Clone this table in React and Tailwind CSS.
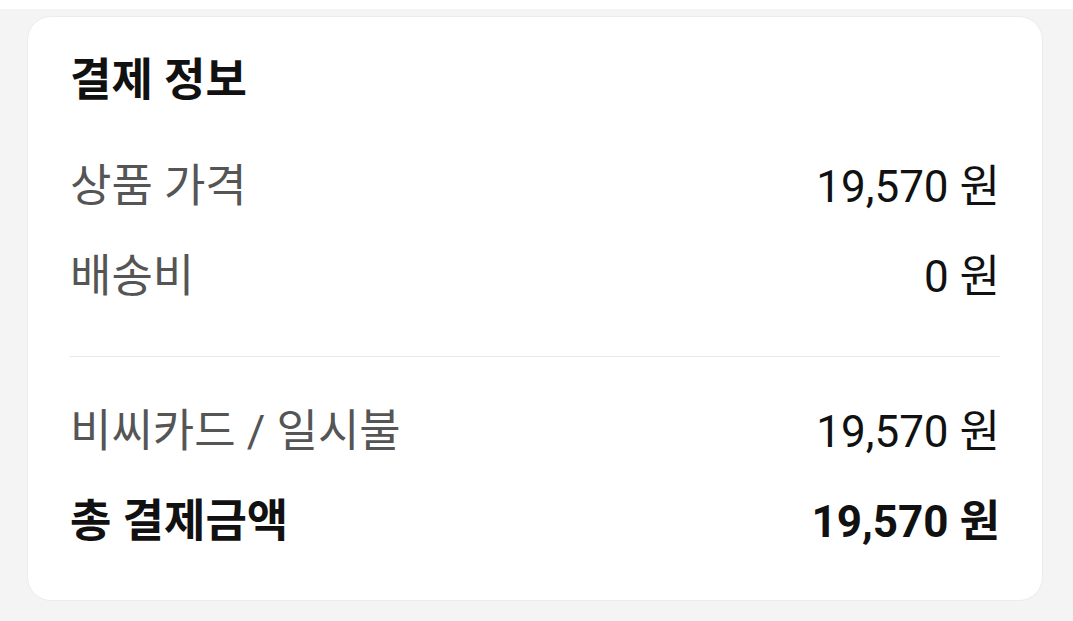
export default function App() {
  const font = { fontFamily: 'Roboto, "Noto Sans CJK KR", sans-serif' };
  const Row = ({ label, value, bold }) => (
    <div className="flex h-[90px] items-center justify-between">
      <span className={bold ? "text-[45px] font-bold text-[#111111]" : "text-[45px] text-[#555555]"}>{label}</span>
      <span className={bold ? "text-[44px] font-bold text-[#111111]" : "text-[44px] text-[#111111]"}>{value}</span>
    </div>
  );
  return (
    <div className="w-[1073px] h-[621px] overflow-hidden bg-[#f4f4f4]" style={font}>
      <div className="h-[9px] bg-white" />
      <div className="px-[27px] pt-[7px]">
        <div className="w-[1016px] rounded-[24px] border border-[#ececec] bg-white px-[42px] pt-[35px] pb-[33px]">
          <div className="flex h-[58px] items-center text-[45px] font-bold text-[#111111]">결제 정보</div>
          <div className="mt-[32px]">
            <Row label="상품 가격" value="19,570 원" />
            <Row label="배송비" value="0 원" />
          </div>
          <div className="mt-[34px] h-px bg-[#e8e8e8]" />
          <div className="mt-[30px]">
            <Row label="비씨카드 / 일시불" value="19,570 원" />
            <Row label="총 결제금액" value="19,570 원" bold />
          </div>
        </div>
      </div>
    </div>
  );
}
